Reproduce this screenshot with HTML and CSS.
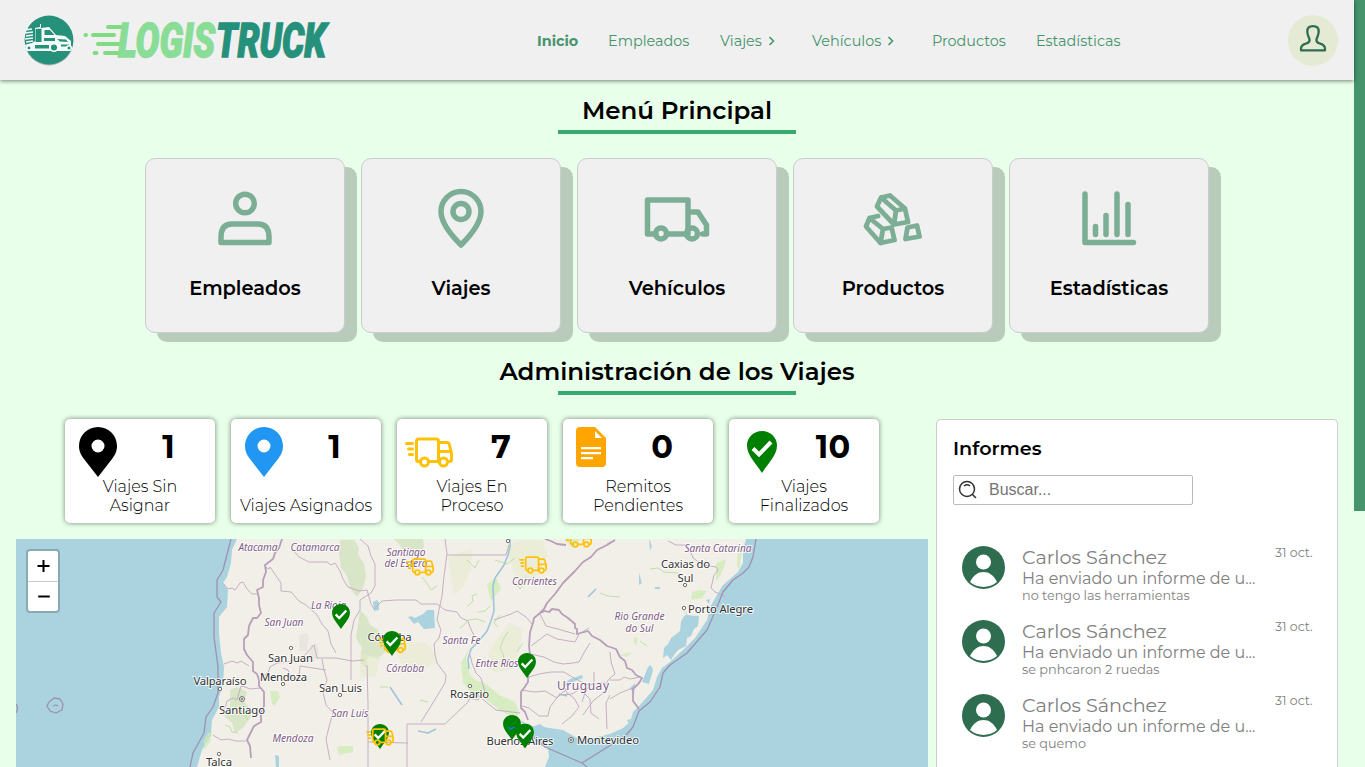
FILE: index.html
```html
<!DOCTYPE html>
<html lang="es">
<head>
<meta charset="utf-8">
<title>Logistruck</title>
<link rel="stylesheet" href="styles.css">
</head>
<body>
<svg width="0" height="0" class="defs">
  <defs>
    <symbol id="pin" viewBox="0 0 38 50"><path fill-rule="evenodd" d="M19 0C8.500 0 0 8.500 0 19c0 6 2.500 9.500 5 13l14 18 14-18c2.500-3.500 5-7 5-13C38 8.500 29.500 0 19 0zm0 12.500a6.500 6.500 0 1 1 0 13 6.500 6.500 0 0 1 0-13z"/></symbol>
    <symbol id="check" viewBox="0 0 30 42"><path fill="#008000" d="M15 0C6.500 0 0 6.500 0 14.500 0 24 8 31 15 42c7-11 15-18 15-27.500C30 6.500 23.500 0 15 0z"/><path d="M6 17.500l6 6L24 11" fill="none" stroke="#fff" stroke-width="4"/></symbol>
    <symbol id="van" viewBox="0 0 48 31"><g fill="none" stroke="#ffc107" stroke-width="3" stroke-linecap="round" stroke-linejoin="round"><path d="M1.500 6.500h6M3.500 12h4M4.500 17.500h3M15 24.500h-1.500a2 2 0 0 1-2-2v-18a2.500 2.500 0 0 1 2.500-2.500h17a2.500 2.500 0 0 1 2.500 2.500v20.500M24 24.500h10M34 5.500h7.500a3 3 0 0 1 3 2.500l2 8v6.500a2 2 0 0 1-2 2h-1M34 14.500h11"/><circle cx="19.500" cy="25" r="4"/><circle cx="38.500" cy="25" r="4"/></g></symbol>
    <symbol id="avatar" viewBox="0 0 43 43"><circle cx="21.500" cy="21.500" r="21.500" fill="#2e6d4f"/><circle cx="21.500" cy="16" r="7.500" fill="#fff"/><path d="M8 36c3.500-7 8-10 13.500-10S31.500 29 35 36c-8 6.500-19 6.500-27 0z" fill="#fff"/></symbol>
  </defs>
</svg>

<header class="header">
  <svg class="logo" width="320" height="60" viewBox="22 10 320 60">
    <defs><clipPath id="disc"><circle cx="50" cy="40" r="24.600"/></clipPath></defs>
    <circle cx="50" cy="41.200" r="24.200" fill="#a9b5af"/>
    <circle cx="50" cy="40" r="24.400" fill="#26917a"/>
    <g clip-path="url(#disc)">
      <path d="M25 49v-4l8-2 3-2V28l5-1V24h1v4l8-1 7 8 9 1 6 5v8l-1 2H26z" fill="#f4faf7"/>
      <path d="M45.500 30h5.500l4.500 5h-10zM36.500 29l6-.5V42h-6zM45 38h11v3H45zM36 45h14v3.500H36zM58 39l9 .5 2 2.500-8-.5zM62 44.500h8v2h-8z" fill="#26917a"/>
      <path d="M26 30l7-1M26 33l8-1M27 36l7-1M26 39l8-1M27 42l7-1" stroke="#f4faf7" stroke-width="1.400"/>
      <path d="M44 28v14" stroke="#f4faf7"/>
      <g fill="#26917a" stroke="#fff" stroke-width="1.500"><circle cx="55" cy="47.500" r="3.800"/><circle cx="70" cy="48" r="2.300"/><circle cx="30" cy="48" r="2.200"/></g>
    </g>
    <g stroke="#80dc82" stroke-width="4" stroke-linecap="round" fill="none"><path d="M109 27h18M94 35h21M99 44h25M106 53h16M86.500 35h.5M95.500 53h2"/></g>
    <g class="logo-text"><text x="119" y="57" textLength="97" lengthAdjust="spacingAndGlyphs" fill="#8add96" stroke="#8add96">LOGIS</text><text x="217" y="57" textLength="110" lengthAdjust="spacingAndGlyphs" fill="#26917a" stroke="#26917a">TRUCK</text></g>
  </svg>
  <nav class="nav">
    <a class="nav-item active">Inicio</a>
    <a class="nav-item n2">Empleados</a>
    <a class="nav-item n3">Viajes <svg width="8" height="12" viewBox="0 0 8 12"><path d="M1.500 2l4 4-4 4"/></svg></a>
    <a class="nav-item n4">Vehículos <svg width="8" height="12" viewBox="0 0 8 12"><path d="M1.500 2l4 4-4 4"/></svg></a>
    <a class="nav-item n5">Productos</a>
    <a class="nav-item n6">Estadísticas</a>
  </nav>
  <div class="user"><svg width="30" height="30" viewBox="0 0 30 30"><path d="M15 3.200c-4.300 0-5.700 2.400-5.700 5.300 0 4 1.700 5.500 2.200 8 .4 2.300-.8 3.300-3 3.900-3.300.9-5.500 1.800-5.500 5.300v1.600h24v-1.600c0-3.500-2.200-4.400-5.500-5.300-2.200-.6-3.400-1.600-3-3.900.5-2.500 2.200-4 2.200-8 0-2.900-1.400-5.300-5.700-5.300z"/></svg></div>
</header>

<main class="main">
  <h2 class="title title-menu">Menú Principal</h2>
  <section class="menu">
    <a class="menu-card"><svg width="72" height="72" viewBox="0 0 72 72"><circle cx="36" cy="21.500" r="9.300"/><path d="M12 60.500V55c0-9 4-13 11-13h26c7 0 11 4 11 13v5.500z"/></svg><span>Empleados</span></a>
    <a class="menu-card"><svg width="72" height="72" viewBox="0 0 72 72"><circle cx="36" cy="29.500" r="8"/><path d="M36 63C26 53 16 41 16 29.500a20 20 0 0 1 40 0C56 41 46 53 36 63z"/></svg><span>Viajes</span></a>
    <a class="menu-card"><svg width="72" height="72" viewBox="0 0 72 72"><path d="M15 52H6.500V18H47v34H27M47 30h10l8.500 13v9h-4"/><circle cx="20" cy="51.500" r="5.500"/><circle cx="51" cy="51.500" r="5.500"/></svg><span>Vehículos</span></a>
    <a class="menu-card"><svg width="72" height="72" viewBox="0 0 72 72"><g class="bars"><path d="M33 13.500l-9 2-4 9 17 18 14-2.500-3-13.500zM48 26.500l-9 2-2 14M39 28.500L24 15.500"/><path d="M21 34l-8.500 2-3.500 8.500L23.500 61l14-3-3-12.500-8.500 1.500-2.500 14M26 47L12.500 36"/><path d="M50.500 45.500l9.500-2 2.500 11-14 2.500z"/></g></svg><span>Productos</span></a>
    <a class="menu-card"><svg width="72" height="72" viewBox="0 0 72 72"><path d="M12 12v48.500h48.500M22.500 44.500v8M33 33.500v19M44 12v40.500M55 22.500v30"/></svg><span>Estadísticas</span></a>
  </section>

  <h2 class="title title-admin">Administración de los Viajes</h2>
  <div class="admin">
    <div class="left">
      <section class="stats">
        <div class="stat"><div class="stat-top"><svg class="i-pin" width="38" height="50"><use href="#pin"/></svg><b>1</b></div><p>Viajes Sin<br>Asignar</p></div>
        <div class="stat"><div class="stat-top"><svg class="i-pin blue" width="38" height="50"><use href="#pin"/></svg><b>1</b></div><p class="wide">Viajes Asignados</p></div>
        <div class="stat"><div class="stat-top"><svg class="i-van" width="48" height="31"><use href="#van"/></svg><b>7</b></div><p>Viajes En<br>Proceso</p></div>
        <div class="stat"><div class="stat-top"><svg class="i-doc" width="30" height="40" viewBox="0 0 30 40"><path fill="orange" d="M4 0h15l11 11v25a4 4 0 0 1-4 4H4a4 4 0 0 1-4-4V4a4 4 0 0 1 4-4z"/><path fill="#fff" d="M19 4v7h7zM5 20h20v2.200H5zM5 25h20v2.200H5zM5 30h12v2.200H5z"/></svg><b>0</b></div><p>Remitos<br>Pendientes</p></div>
        <div class="stat"><div class="stat-top"><svg class="i-check" width="30" height="42"><use href="#check"/></svg><b>10</b></div><p>Viajes<br>Finalizados</p></div>
      </section>
      <div class="map">
        <svg class="map-canvas" width="912" height="228" viewBox="16 539 912 228">
          <rect x="16" y="539" width="912" height="228" fill="#aad3df"/>
          <path fill="#f2efe9" d="M237 539L232 550 231 563 227 577 223 583 228 590 227 607 219 617 219 633 221 653 224 667 223 683 219 697 219 707 212 720 211 735 202 750 197 767H545L549 757 548 748 537 743 528 734 524 724 530 726 543 727 563 730 577 738 593 738 610 734 623 728 630 722 633 712 640 705 653 690 657 677 662 668 670 662 683 650 695 638 707 620 710 607 717 595 723 585 738 572 743 563 743 550 746 539z"/>
          <g>
            <path fill="#c9dfb4" opacity=".65" d="M340 540l14 0 5 8-1 6 6 10 2 12-3 12-6 9-7-9-3-12-6-8-2-14zM394 539h29l1 7-4 10-6-4-10-1-5-7zM360 610l7 7 3 8 7 4 6 8 3 14-8 8-10-3-2 12-6-6 2-14-6-10zM230 690l7-3 10 5-3 9 5 7 2 8-8 12-8 5-3-10-8-7 6-8z"/>
            <path fill="#cdebb0" opacity=".7" d="M469 649l-3 10 4 16 7 6 8 2 14 12 16 7 4 9-2 7-13-5-20-15-9-1-12-14-2-20zM487 585l9-8 5 12-10 12zM564 539h16l-8 9zM337 747l4-1h12v6l-14 3z"/>
            <path fill="#e3ecc8" opacity=".5" d="M393 648l14-7 19 2 8 10 2 10-16 8-17-6zM489 650l20-27 14 6-4 20-6 20-16 4-10-6zM505 545l20-5 18 1 4 14-9 20-20 10-6-20zM448 559l12-7 12-3-1 20-8 18-9 8zM360 652l10 4 10 0-4 20-16 2z"/>
            <path fill="#cdebb0" opacity=".7" d="M716 563l5-2 5-2-2 8-4 9-4 5 0-10zM738 549l4 2-3 20-2-6zM204 740l4-7 4-1-2 10-6 8zM270 691l8 0 2 6-5 9-3-2zM692 592l8-2 7 1-5 7-11 2zM620 655l12-3-5 5zM634 637l4 1-2 7-2-1z"/>
            <path stroke="#bfe0a5" fill="none" d="M467 607l6-6-1-5 5-2M460 628l4-3 4-5 9-1 8 3M478 612l7-1 5-5M508 632l-4 6-4 10 3 6 1 6M517 652l3-5 3-4M512 583l4 1 4 5 3-4 3-8M422 577l4 5 5 8 6-4M236 707l3 6 4-2 5 9M225 725l5 2 2 5 6 1M600 593l8 3 12 1M650 569l8-1 6 4 14 1M640 641l7 5M682 608l6 8 7 5M380 687h8M420 700l8 2M467 560l8 8 4-8M495 560l12 4 8-6M500 615l-6 8 4 4"/>
            <path fill="#ded6cf" opacity=".4" d="M299 636l5-3 5 2-2 16h-8zM310 645l7-2 2 8-1 7-9 5z"/>
          </g>
          <g fill="#aad3df">
            <path d="M407 618l4-2 4 2 8-4 4-4 7 0 1 18-11 1-6-7-4 2-5-6zM373 602l4-2 2 3 0 7-5 1zM520 720l12 7 8-3 8 6-8 12-11-8z"/>
            <path d="M685 615l14 1-1 10-4 3-3 7-4 2-1 8-8 4-4 5-3 5-4-5-4 3 1-10 4-4 3-6 4-3 5-4 1-10zM646 672l2-5 3-2 2 5-4 14-7-2zM645 704l5-7 2 2-7 8zM630 688l5-5-1 12zM706 600l4-1-1 5zM649 539l3 7-2 5zM639 573l3 10-3 2zM275 755l4 1v12h-3zM627 720l4-1-2 5zM564 684l6-5 12-4 1 3-8 3-9 5z"/>
          </g>
          <path fill="none" stroke="#9fc5d8" stroke-width="1.600" d="M510 539v8l-2 8-4 10-9 13-2 8 1 25-3 10-4 10-8 10-8 8-3 10 1 10M436 729l-8 4-10-2M390 687l12 18M559 694l8 2M588 597l8-8M655 588h5"/>
          <g class="province">
            <path d="M223 583l5 6 4-1 3 2 5-7 3-1 4 7 5 5 6 0M265 567l4 2 1-2 11 16v8l10 1 8 9 7 4 11 10 5 9 6 7 3 13 5 9M293 550l6 7 10 5 18 0 4 3 4-2 5 8 3 8 5 8 11 4 8-1 4 14 3 5 8-8 14-1 20 0 5 4 16 0 8 6 12 2 4 6 7 3 2 6 5 11M360 539l8 7 3 10 4 8 0 22-4 7-11 7 0 10-6 10-3 15 0 45M445 539l2 15-3 22-2 20-3 14-2 10 4 10-2 8-5 6 1 10 2 9 9 12-1 8-14 23-10 16M447 555h59l3-10M224 664l8-3 5 2 4-2 8 5M221 711l4-3 2-7 6-3 4 2 4-14 4 1 5 2 11-1M213 735l8 5 7-1 8 2 10 0M263 676l5-3 2-6 7-4 10-1 17-6 10-11 3 13h19l16 3 12-1M283 668l5 2 3 8h8l1-12 26 4M322 659l2 11 3 10-4 12 3 13 7 8-3 10-4 16 4 21M367 665l1 38v65M368 742l40 1M407 767v-43h38l23-22 2-4 8 2 7-8-4-14-5-5-4-10-2-8M475 693l21 17 24 3M494 620l17-6 6-3 9 6 7 8"/>
            <path d="M540 614l6 12 12 3 17 5M531 646l8-6 8-6 10 5 18 3 4-8 10-6M530 654l14 3 10 5 9 2 10-1 6-1 6-11 5-8M529 677l10-3 12-2 13 0 10 6 13 7 18-3M521 690l14 2 10-1 12 7 6-6 6-4M522 706l7 2 10 8 9 0 2-9 9-12 13-1 8-5 10 10 1 14 8 6M563 684l4 9 7 5 5 9-7 9-10 8M594 672l0 10-8 8-4 12M606 691l-8 6-5 4-10 14M610 699l10-6 15-6M610 652l1 10 4 12-6 5-5 8M610 695l-4 8 1 26M610 680h10l4-3 6 2 10-2M668 541l8 4 10 0 4 5 3 8 10 7 13 2 2 3-4 5-3 13 4 4 10 4M615 540l-8 4"/>
          </g>
          <g class="country">
            <path d="M282 539l-3 9-4 5-2 6-8 6 1 7-3 8 0 7-6 3 2 8 0 7 2 8-4 5-4 0-4 8-1 9-4 4 0 10 3 6 6 7 0 9 4 3 2 6 0 6 5 6 0 14-3 7 0 9-7 4-4 8-3 6 3 6 1 12M615 540l-8 5-10 5-6 7-8 5-8 9-12 12-8 11-8 9-3 6-4 4-6 5-1 5-3 9-1 14 1 10-2 8 0 18-4 6-3 4v16l4 4 3 8M540 613l5-2 4 1 3-3 7 1 3 4 6 4 7 6 0 4 2 1 0 5 11-3 4 5 8 4 7 6 9 3 4 8 5 4 2 7 5 2 4 5 6 3-3 5-6 6v12l6 8M545 539l6 2 6 3 9 1"/>
            <path class="sea" d="M231 539l-8 31-6 10v17l4 5-7 11v24l4 30v26l-5 14-7 10-2 16-11 20-3 14M756 539l-3 18-4 10-6 6-10 7-10 12-6 15-10 23-20 23-17 12-7 8-3 14-10 15-11 9-6 16-6 7-5 4-40 25-37-16-12-10M582 763l5 4M16 704q3 4 0 9"/>
            <path class="sea" d="M49 702l5-4 6 1 3 5-1 6-6 3-6-2-3-5zM53 706l3-1 2 1"/>
          </g>
          <g class="towns"><circle cx="291" cy="648" r="1.700"/><circle cx="283" cy="684" r="1.700"/><circle cx="220" cy="689" r="1.700"/><circle cx="242" cy="699" r="2.500"/><circle cx="242" cy="699" r=".8"/><circle cx="219" cy="754" r="1.700"/><circle cx="340" cy="695" r="1.700"/><circle cx="470" cy="686" r="1.700"/><circle cx="508" cy="541" r="1.700"/><circle cx="685" cy="585" r="1.700"/><circle cx="684" cy="608" r="1.700"/><circle cx="571" cy="740" r="2.500"/><circle cx="571" cy="740" r=".8"/></g>
          <g class="region">
            <text x="258" y="550.500" textLength="39">Atacama</text><text x="315" y="550.500" textLength="49">Catamarca</text><text x="406" y="555.500" textLength="39">Santiago</text><text x="406" y="567" textLength="43">del Estero</text><text x="328.500" y="609" textLength="35">La Rioja</text><text x="284" y="626" textLength="39">San Juan</text><text x="534.500" y="585" textLength="45">Corrientes</text><text x="461.500" y="644" textLength="38">Santa Fe</text><text x="405" y="672" textLength="38">Córdoba</text><text x="497" y="667" textLength="43">Entre Ríos</text><text x="350" y="717" textLength="37">San Luis</text><text x="293" y="741.500" textLength="41">Mendoza</text><text x="639.500" y="619.500" textLength="50">Rio Grande</text><text x="639.500" y="631.500" textLength="28">do Sul</text><text x="718" y="552" textLength="67">Santa Catarina</text>
          </g>
          <text class="nation" x="583" y="690" textLength="52">Uruguay</text>
          <g class="city">
            <text x="290.500" y="662" textLength="45">San Juan</text><text x="283.500" y="680.500" textLength="47">Mendoza</text><text x="220" y="684.500" textLength="53">Valparaíso</text><text x="242" y="714" textLength="46">Santiago</text><text x="219" y="766" textLength="26">Talca</text><text x="340.500" y="691.500" textLength="43">San Luis</text><text x="389.500" y="641" textLength="44">Córdoba</text><text x="469.500" y="698" textLength="39">Rosario</text><text x="520" y="745" textLength="67">Buenos Aires</text><text x="608" y="744" textLength="62">Montevideo</text><text x="685.500" y="568" textLength="49">Caxias do</text><text x="685.500" y="581.500" textLength="16">Sul</text><text x="720.500" y="612.500" textLength="65">Porto Alegre</text>
          </g>
          <g>
            <use href="#van" x="406" y="557.500" width="28" height="19"/><use href="#van" x="519" y="555.500" width="28" height="19"/><use href="#van" x="564" y="529.500" width="28" height="19"/>
            <use href="#van" x="378" y="635" width="28" height="19"/><use href="#check" x="332" y="604" width="18" height="25"/><use href="#check" x="383" y="631" width="18" height="25"/>
            <use href="#check" x="518" y="653" width="18" height="25"/><use href="#check" x="371" y="724" width="18" height="25"/><use href="#van" x="366" y="727.500" width="28" height="19"/>
            <use href="#check" x="503" y="715" width="18" height="25"/><path d="M506.500 725l4.500 4 8-8" fill="none" stroke="#008000" stroke-width="4"/><path d="M508 727l2.500 2 4-2" fill="none" stroke="#157cca" stroke-width="1.500"/><use href="#check" x="516" y="723.500" width="18" height="25"/>
          </g>
        </svg>
        <div class="zoom"><svg width="30" height="30" viewBox="0 0 30 30"><path d="M9.500 15h12M15.500 9v12"/></svg><svg width="30" height="30" viewBox="0 0 30 30"><path d="M10 15h12"/></svg></div>
      </div>
    </div>

    <aside class="reports">
      <h3>Informes</h3>
      <div class="search"><svg width="20" height="20" viewBox="0 0 20 20"><circle cx="9" cy="9" r="7.500"/><path d="M14.500 14.500l3.500 3.500M6 6q3-2.500 6 0"/></svg><span>Buscar...</span></div>
      <article class="report"><svg width="43" height="43"><use href="#avatar"/></svg><div class="info"><p class="name">Carlos Sánchez</p><p class="msg">Ha enviado un informe de u...</p><p class="detail">no tengo las herramientas</p></div><time>31 oct.</time></article>
      <article class="report"><svg width="43" height="43"><use href="#avatar"/></svg><div class="info"><p class="name">Carlos Sánchez</p><p class="msg">Ha enviado un informe de u...</p><p class="detail">se pnhcaron 2 ruedas</p></div><time>31 oct.</time></article>
      <article class="report"><svg width="43" height="43"><use href="#avatar"/></svg><div class="info"><p class="name">Carlos Sánchez</p><p class="msg">Ha enviado un informe de u...</p><p class="detail">se quemo</p></div><time>31 oct.</time></article>
    </aside>
  </div>
</main>
<div class="scroll-thumb"></div>
</body>
</html>
```

FILE: styles.css
```css
* { box-sizing: border-box; }
body { margin: 0; height: 767px; overflow: hidden; background: #e8ffea; font-family: Montserrat, Inter, sans-serif; color: #000; }
h2, h3, p { margin: 0; }
.defs { display: block; position: absolute; }
.header { position: relative; z-index: 1; width: 1354px; height: 80px; background: #f0f0f0; box-shadow: 0 1px 4px rgba(0,0,0,.5); display: flex; align-items: center; padding: 0 16px 0 21px; }
.logo { flex: none; margin-right: 196px; overflow: visible; }
.logo-text { font: italic 900 47.500px Roboto, sans-serif; stroke-width: 1.400px; }
.nav { display: flex; flex: 1; font-size: 14.400px; line-height: 20px; color: #45946c; padding-top: 1px; }
.nav-item { flex: none; white-space: nowrap; width: 112px; }
.nav-item.active { width: 71px; font-weight: 700; }
.nav-item svg { margin-left: 2px; vertical-align: -1px; fill: none; stroke: #45946c; stroke-width: 1.600; }
.nav-item.n3 { width: 92px; }
.nav-item.n4 { width: 120px; }
.nav-item.n5 { width: 104px; }
.nav-item.n6 { width: 100px; }
.user { width: 50px; height: 51px; border-radius: 50%; background: #e5ead4; display: flex; align-items: center; justify-content: center; padding-bottom: 5px; }
.user svg { fill: none; stroke: #2e6d4f; stroke-width: 2.300; stroke-linejoin: round; }

.main { width: 1354px; height: 687px; overflow: hidden; padding-top: 15px; }
.title { font-weight: 600; font-size: 24.500px; line-height: 30px; text-align: center; height: 39px; }
.title::after { content: ""; display: block; width: 238px; height: 4px; margin: 5px auto 0; background: #37aa70; }
.title-admin { margin-top: 23px; }
.menu { display: flex; justify-content: center; gap: 16px; margin-top: 24px; }
.menu-card { width: 200px; height: 175px; background: #f0f0f0; border: 1px solid #ccc; border-radius: 10px; box-shadow: 12px 9px 0 rgba(0,0,0,.2); display: flex; flex-direction: column; align-items: center; padding-top: 23px; font-size: 19.400px; font-weight: 600; line-height: 24px; }
.menu-card svg { fill: none; stroke: #7bae94; stroke-width: 5.500; stroke-linecap: round; stroke-linejoin: round; margin-bottom: 22px; }
.menu-card .bars { stroke-width: 4.800; }

.admin { display: flex; gap: 8px; padding: 24px 16px 0; }
.left { width: 912px; }
.stats { display: flex; gap: 16px; padding-left: 49px; }
.stat { width: 150px; height: 104px; background: #fff; border-radius: 5px; box-shadow: 0 0 5px rgba(0,0,0,.5); text-align: center; }
.stat-top { height: 58px; display: flex; align-items: flex-start; padding: 8px 0 0 14px; }
.stat-top svg { flex: none; }
.stat-top b { flex: 1; font-size: 32px; line-height: 40px; font-weight: 700; }
.stat p { font-size: 16px; font-weight: 300; line-height: 19px; }
.stat p.wide { padding-top: 19px; }
.i-pin { margin-right: 5px; }
.i-pin.blue { fill: #2196f3; }
.i-van { margin: 10px 2px 0 -6px; }
.i-doc { margin-left: -1px; margin-right: 5px; }
.i-check { margin: 4px 10px 0 4px; }
.map { margin-top: 16px; height: 228px; position: relative; overflow: hidden; }
.map-canvas { display: block; }
.map-canvas text { font-family: "Noto Sans", sans-serif; text-anchor: middle; paint-order: stroke; stroke: rgba(255,255,255,.75); stroke-width: 2px; }
.map-canvas .region text { font-size: 10.200px; font-style: italic; fill: #815b87; }
.map-canvas .city text { font-size: 11.300px; fill: #333; }
.map-canvas .nation { font-size: 12px; fill: #815b87; }
.province { fill: none; stroke: #c4b0c4; stroke-width: 1; stroke-linejoin: round; }
.country { fill: none; stroke: #b79fb9; stroke-width: 1.800; stroke-linejoin: round; }
.sea { stroke: #9d91b0; stroke-width: 1.300; }
.towns { fill: #f8f5f0; stroke: #555; stroke-width: .8; }
.zoom { position: absolute; left: 10px; top: 10px; width: 34px; height: 64px; border: 2px solid #88aab3; border-radius: 4px; background: #fff; }
.zoom svg { display: block; fill: none; stroke: #000; stroke-width: 2; }
.zoom svg + svg { border-top: 1px solid #ccc; }

.reports { width: 402px; height: 348px; background: #fff; border: 1px solid #ccc; border-bottom: 0; border-radius: 5px 5px 0 0; padding: 16px 16px 0; }
.reports h3 { font-size: 19.200px; line-height: 24px; font-weight: 600; }
.search { width: 240px; height: 30px; margin-top: 15px; margin-bottom: 30px; border: 1px solid #bbb; border-radius: 2px; display: flex; align-items: center; padding-left: 4px; font: 16px "Liberation Sans", sans-serif; color: #757575; }
.search svg { fill: none; stroke: #333; stroke-width: 1.500; margin-right: 11px; }
.report { display: flex; height: 74px; padding: 11px 0 0 9px; color: #808080; }
.report > svg { flex: none; margin-right: 17px; }
.info { width: 253px; flex: none; }
.name { font-size: 19.200px; line-height: 23px; font-weight: 400; }
.msg { font-size: 16px; line-height: 19px; font-weight: 400; }
.detail { font-size: 12.800px; line-height: 15px; }
.report time { font-size: 12.500px; line-height: 15px; margin-top: -1px; white-space: nowrap; }
.scroll-thumb { position: absolute; right: 0; top: 0; width: 11px; height: 511px; background: #45946c; }
```
